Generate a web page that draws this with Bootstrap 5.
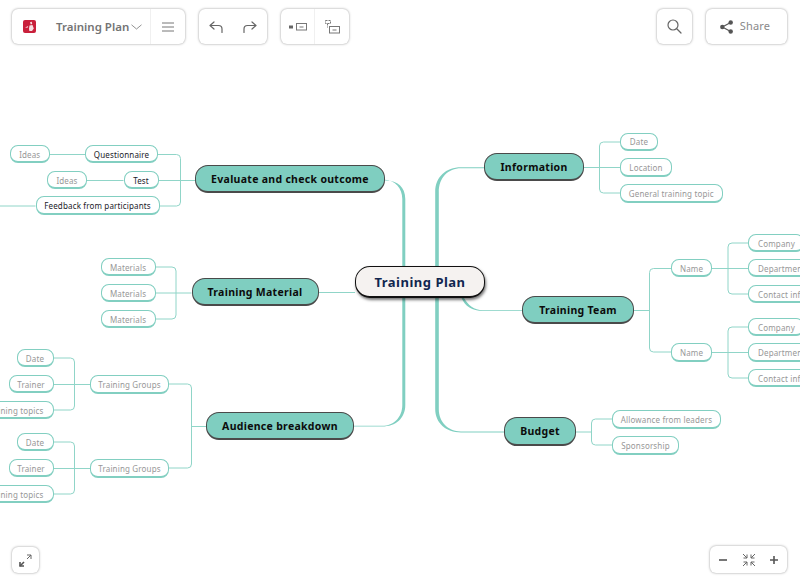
<!doctype html>
<html lang="en">
<head>
<meta charset="utf-8">
<title>Training Plan</title>
<link href="https://cdn.jsdelivr.net/npm/bootstrap@5.3.0/dist/css/bootstrap.min.css" rel="stylesheet">
<style>
html,body{height:100%;margin:0;overflow:hidden;background:#fff}
.page-shell{position:relative;width:800px;height:583px;overflow:hidden}
.map-canvas{position:absolute;inset:0}
.map-lines{position:absolute;left:0;top:0}
.map-lines .thin{fill:none;stroke:#90d5c8;stroke-width:1}
.map-lines .taper{fill:#80cfc1;stroke:none}
.mnode{position:absolute;display:flex;align-items:center;justify-content:center;white-space:nowrap;font-family:"Noto Sans",sans-serif;padding-top:2px}
.mnode-root{background:#f5f2f0;border:1.5px solid #111;border-bottom-width:2px;border-radius:15px;box-shadow:1px 2px 3px rgba(0,0,0,.55);font-size:13px;font-weight:700;color:#10264f;letter-spacing:.5px}
.mnode-main{background:#7fcec0;border:1.5px solid #4a4a4a;border-bottom-width:2px;border-radius:13px;font-size:10.5px;font-weight:700;color:#0c0c0c;letter-spacing:.3px}
.mnode-leaf{background:#fff;border:1.5px solid #82cfc1;border-bottom-width:2px;border-radius:8px;font-size:8px;color:#979797;letter-spacing:.15px}
.mnode-dark{color:#1b1b2a}
.mnode-clip-l{justify-content:flex-end;padding-right:9px}
.mnode-clip-r{justify-content:flex-start;padding-left:9px}
.tool-layer{position:absolute;inset:0;display:flex;flex-direction:column;justify-content:space-between;padding:9px 13px 10px 12px;pointer-events:none}
.tool-row{display:flex;align-items:flex-start;justify-content:space-between}
.tool-groups{display:flex;gap:14px;align-items:flex-start}
.tool-box{display:flex;align-items:center;justify-content:center;background:#fff;border:0;padding:0;color:#666;border-radius:6px;box-shadow:0 0 2.5px rgba(0,0,0,.42);height:35px}
.tool-btn{display:flex;align-items:center;justify-content:center;border:0;background:transparent;padding:0;height:100%;color:#666}
.tool-sep{border-right:1px solid #f0f0f0}
.tool-title{font-family:"Noto Sans",sans-serif;font-size:11.5px;font-weight:600;color:#747474;white-space:nowrap;margin-right:2px}
.tool-share{font-family:"Noto Sans",sans-serif;font-size:11px;color:#8a8a8a;letter-spacing:.2px}
.brand-box{width:139px;justify-content:flex-start;padding-left:11px}
.w-menu{width:34px}.w-hist{width:34px}.w-side{width:34px}.w-search{width:35px}
.w-share{width:81px;gap:7px;padding-right:3px}
.box-small{height:26px}
.w-corner{width:27px}
.zoom-box{width:77px;height:27px}
.zoom-btn{width:26px}
.tool-svg{fill:none;stroke:#666;stroke-width:1.2;stroke-linecap:round;stroke-linejoin:round}
.chev-svg{fill:none;stroke:#777;stroke-width:.8}
.logo-mark{margin-right:20px}
</style>
</head>
<body>
<div class="page-shell">
  <div class="map-canvas">
    <svg class="map-lines" width="800" height="583" viewBox="0 0 800 583" aria-hidden="true">
      <path class="taper" d="M385 179.8C395 180.3 402.3 188 402.3 199V266H405.3V199C405.3 187 397 180.2 385 180.6Z"/>
      <path class="taper" d="M402.3 298V405C402.3 417 394 425.8 382 425.8H354V426.5H382C396 426.5 405.3 418 405.3 405V298Z"/>
      <path class="taper" d="M484 167.3H461C446 167.3 435.2 177 435.2 192V266H438.8V192C438.8 178 448 168.3 461 168.3H484Z"/>
      <path class="taper" d="M435.2 298V409C435.2 423 446 432.4 461 432.4H504V431.4H461C448 431.4 438.8 422 438.8 409V298Z"/>
      <path class="taper" d="M461.5 298C465 306 472 311 483 311H522V310.2H483C474 310.2 468 305 464 298Z"/>
      <path class="thin" d="M318 292.5H355"/>
      <path class="thin" d="M158 154.5H176.5Q180.5 154.5 180.5 158.5V202Q180.5 206 176.5 206H159M158 180.5H195M50 154.5H85M87 180.5H123.5M0 206H35.5"/>
      <path class="thin" d="M155 267H172Q176 267 176 271V315Q176 319 172 319H155M155 293H191.5"/>
      <path class="thin" d="M169 384H187.5Q191.5 384 191.5 388V464Q191.5 468 187.5 468H169M191.5 426.5H206"/>
      <path class="thin" d="M53.5 358H70.5Q74.5 358 74.5 362V406Q74.5 410 70.5 410H53.5M53.5 384.5H90"/>
      <path class="thin" d="M53.5 442H70.5Q74.5 442 74.5 446V490Q74.5 494 70.5 494H53.5M53.5 468.5H90"/>
      <path class="thin" d="M620 142H603.5Q599.5 142 599.5 146V189Q599.5 193 603.5 193H620M584 167.5H620"/>
      <path class="thin" d="M671 268.5H653.5Q649.5 268.5 649.5 272.5V348Q649.5 352 653.5 352H671M634 310.5H649.5"/>
      <path class="thin" d="M748 243H732Q728 243 728 247V290Q728 294 732 294H748M712 268.5H748"/>
      <path class="thin" d="M748 327H732Q728 327 728 331V374Q728 378 732 378H748M712 352.5H748"/>
      <path class="thin" d="M612 419H595.5Q591.5 419 591.5 423V441Q591.5 445 595.5 445H612M576 432H591.5"/>
    </svg>

    <div class="mnode mnode-root" style="left:355px;top:266px;width:130px;height:32px">Training Plan</div>

    <div class="mnode mnode-main" style="left:195px;top:165px;width:190px;height:28px">Evaluate and check outcome</div>
    <div class="mnode mnode-main" style="left:191.5px;top:278px;width:127px;height:28px">Training Material</div>
    <div class="mnode mnode-main" style="left:206px;top:412px;width:148px;height:28px">Audience breakdown</div>
    <div class="mnode mnode-main" style="left:484px;top:153px;width:100px;height:28px">Information</div>
    <div class="mnode mnode-main" style="left:522px;top:296px;width:112px;height:28px">Training Team</div>
    <div class="mnode mnode-main" style="left:504px;top:417px;width:72px;height:29px">Budget</div>

    <div class="mnode mnode-leaf" style="left:9.5px;top:145px;width:40.5px;height:18px">Ideas</div>
    <div class="mnode mnode-leaf mnode-dark" style="left:85px;top:145px;width:73px;height:18px">Questionnaire</div>
    <div class="mnode mnode-leaf" style="left:47px;top:171px;width:40px;height:18px">Ideas</div>
    <div class="mnode mnode-leaf mnode-dark" style="left:123.5px;top:171px;width:35px;height:18px">Test</div>
    <div class="mnode mnode-leaf mnode-dark" style="left:35.5px;top:196px;width:124px;height:18.5px">Feedback from participants</div>

    <div class="mnode mnode-leaf" style="left:100.5px;top:258px;width:55px;height:18px">Materials</div>
    <div class="mnode mnode-leaf" style="left:100.5px;top:284px;width:55px;height:18px">Materials</div>
    <div class="mnode mnode-leaf" style="left:100.5px;top:310px;width:55px;height:18px">Materials</div>

    <div class="mnode mnode-leaf" style="left:90px;top:375px;width:79px;height:18.5px">Training Groups</div>
    <div class="mnode mnode-leaf" style="left:90px;top:459px;width:79px;height:18.5px">Training Groups</div>
    <div class="mnode mnode-leaf" style="left:16.5px;top:349px;width:37px;height:18px">Date</div>
    <div class="mnode mnode-leaf" style="left:8.5px;top:375px;width:45px;height:18px">Trainer</div>
    <div class="mnode mnode-leaf mnode-clip-l" style="left:-40px;top:401px;width:93.5px;height:18px">Training topics</div>
    <div class="mnode mnode-leaf" style="left:16.5px;top:433px;width:37px;height:18px">Date</div>
    <div class="mnode mnode-leaf" style="left:8.5px;top:459px;width:45px;height:18px">Trainer</div>
    <div class="mnode mnode-leaf mnode-clip-l" style="left:-40px;top:485px;width:93.5px;height:18px">Training topics</div>

    <div class="mnode mnode-leaf" style="left:620px;top:132.5px;width:38px;height:18.5px">Date</div>
    <div class="mnode mnode-leaf" style="left:620px;top:158px;width:52px;height:19px">Location</div>
    <div class="mnode mnode-leaf" style="left:620px;top:184px;width:102.5px;height:18.5px">General training topic</div>

    <div class="mnode mnode-leaf" style="left:671px;top:259px;width:41px;height:18px">Name</div>
    <div class="mnode mnode-leaf mnode-clip-r" style="left:748px;top:234px;width:56px;height:18px">Company</div>
    <div class="mnode mnode-leaf mnode-clip-r" style="left:748px;top:259px;width:80px;height:18px">Department</div>
    <div class="mnode mnode-leaf mnode-clip-r" style="left:748px;top:285px;width:80px;height:18px">Contact info</div>
    <div class="mnode mnode-leaf" style="left:671px;top:343px;width:41px;height:18.5px">Name</div>
    <div class="mnode mnode-leaf mnode-clip-r" style="left:748px;top:318px;width:56px;height:18px">Company</div>
    <div class="mnode mnode-leaf mnode-clip-r" style="left:748px;top:343px;width:80px;height:18.5px">Department</div>
    <div class="mnode mnode-leaf mnode-clip-r" style="left:748px;top:369px;width:80px;height:18px">Contact info</div>

    <div class="mnode mnode-leaf" style="left:612px;top:410px;width:109px;height:18.5px">Allowance from leaders</div>
    <div class="mnode mnode-leaf" style="left:612px;top:436px;width:67px;height:18.5px">Sponsorship</div>
  </div>

  <div class="tool-layer">
    <div class="tool-row">
      <div class="tool-groups">
        <div class="tool-box">
          <div class="tool-btn brand-box tool-sep">
            <svg class="logo-mark" width="13" height="13" viewBox="0 0 13 13" aria-hidden="true"><rect width="13" height="13" rx="2" fill="#c9203b"/><path d="M2 7.5 5.2 6 4.6 7.8ZM7 2.2 8.8 1.8 9.2 4 7.8 4.6ZM6.5 5.5 9.5 5 10.8 8.5 9 11H6.3L6 8.5Z" fill="#f6dfe2"/></svg>
            <span class="tool-title">Training Plan</span>
            <svg width="11" height="6" viewBox="0 0 11 6" aria-hidden="true"><path class="chev-svg" d="M.5 .8 5.5 5 10.5 .8"/></svg>
          </div>
          <button class="tool-btn w-menu" type="button" aria-label="Menu"><svg width="12" height="10" viewBox="0 0 12 10"><path d="M0 1H12M0 5H12M0 9H12" stroke="#777" fill="none"/></svg></button>
        </div>
        <div class="tool-box">
          <button class="tool-btn w-hist" type="button" aria-label="Undo"><svg width="14" height="14" viewBox="0 0 14 14"><path class="tool-svg" d="M5 2 1 5.5 5 9M1 5.5H9.5Q13 5.5 13 9V12.5"/></svg></button>
          <button class="tool-btn w-hist" type="button" aria-label="Redo"><svg width="14" height="14" viewBox="0 0 14 14"><path class="tool-svg" d="M9 2 13 5.5 9 9M13 5.5H4.5Q1 5.5 1 9V12.5"/></svg></button>
        </div>
        <div class="tool-box">
          <button class="tool-btn w-side tool-sep" type="button" aria-label="Add sibling"><svg width="18" height="8" viewBox="0 0 18 8"><rect x="0" y="2.5" width="4" height="3" fill="#666"/><rect x="7.5" y=".5" width="10" height="6.5" fill="none" stroke="#777"/><path d="M10.5 4H14.5" stroke="#777"/></svg></button>
          <button class="tool-btn w-side" type="button" aria-label="Add child"><svg width="15" height="14" viewBox="0 0 15 14"><path d="M.5 .5H5.5V3.5H.5ZM2.5 3.5V7.5" fill="none" stroke="#777" stroke-dasharray="2 1"/><rect x="4.5" y="6.5" width="10" height="6.5" fill="none" stroke="#777"/><path d="M7.5 10H11.5" stroke="#777"/></svg></button>
        </div>
      </div>
      <div class="tool-groups">
        <button class="tool-box w-search" type="button" aria-label="Search"><svg width="15" height="15" viewBox="0 0 15 15"><circle cx="6" cy="6" r="5" class="tool-svg" stroke-width="1.4"/><path class="tool-svg" stroke-width="1.4" d="M10 10 14 14"/></svg></button>
        <button class="tool-box w-share" type="button"><svg width="13" height="14" viewBox="0 0 13 14" aria-hidden="true"><circle cx="2.3" cy="7" r="2.2" fill="#555"/><circle cx="10.7" cy="2.5" r="2.2" fill="#555"/><circle cx="10.7" cy="11.5" r="2.2" fill="#555"/><path d="M2.3 7 10.7 2.5M2.3 7 10.7 11.5" stroke="#555" stroke-width="1.2"/></svg><span class="tool-share">Share</span></button>
      </div>
    </div>
    <div class="tool-row align-items-end">
      <button class="tool-box box-small w-corner" type="button" aria-label="Full screen"><svg width="13" height="13" viewBox="0 0 13 13"><path d="M8 1H12V5" fill="none" stroke="#666"/><path d="M12 1 8 5" stroke="#666"/><path d="M1 8V12H5" fill="none" stroke="#555" stroke-width="1.6"/><path d="M1 12 5 8" stroke="#555" stroke-width="1.6"/></svg></button>
      <div class="tool-box zoom-box">
        <button class="tool-btn zoom-btn" type="button" aria-label="Zoom out"><svg width="8" height="8" viewBox="0 0 8 8"><path d="M0 4H8" stroke="#555" stroke-width="1.6"/></svg></button>
        <button class="tool-btn zoom-btn" type="button" aria-label="Fit"><svg width="14" height="14" viewBox="0 0 14 14"><path d="M1 1 5 5M5 1.5V5H1.5M13 1 9 5M9 1.5V5H12.5M1 13 5 9M5 12.5V9H1.5M13 13 9 9M9 12.5V9H12.5" fill="none" stroke="#666"/></svg></button>
        <button class="tool-btn zoom-btn" type="button" aria-label="Zoom in"><svg width="8" height="8" viewBox="0 0 8 8"><path d="M0 4H8M4 0V8" stroke="#555" stroke-width="1.6"/></svg></button>
      </div>
    </div>
  </div>
</div>
<script src="https://cdn.jsdelivr.net/npm/bootstrap@5.3.0/dist/js/bootstrap.bundle.min.js"></script>
</body>
</html>
